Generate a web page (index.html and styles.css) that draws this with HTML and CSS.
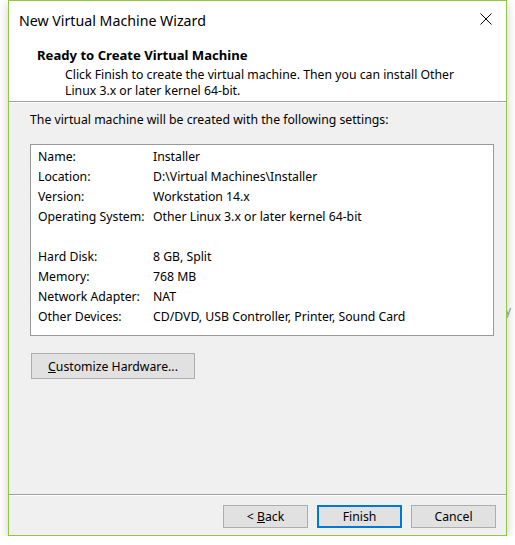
FILE: index.html
```html
<!DOCTYPE html>
<html lang="en">
<head>
<meta charset="utf-8">
<title>New Virtual Machine Wizard</title>
<link rel="stylesheet" href="styles.css">
</head>
<body>
<span class="behind">y</span>
<div class="window">
  <div class="header">
    <div class="titlebar">
      <span class="title">New Virtual Machine Wizard</span>
      <svg class="close" width="12" height="12" viewBox="0 0 12 12" aria-label="Close">
        <path d="M0.5 0.5 L11.5 11.5 M11.5 0.5 L0.5 11.5" stroke="#000" stroke-width="1" fill="none"/>
      </svg>
    </div>
    <div class="heading">Ready to Create Virtual Machine</div>
    <div class="subtitle">Click Finish to create the virtual machine. Then you can install Other<br>Linux 3.x or later kernel 64-bit.</div>
  </div>
  <div class="etch"></div>
  <div class="body">
    <div class="intro">The virtual machine will be created with the following settings:</div>
    <div class="box">
      <div class="row"><span class="label">Name:</span><span class="value">Installer</span></div>
      <div class="row"><span class="label">Location:</span><span class="value">D:\Virtual Machines\Installer</span></div>
      <div class="row"><span class="label">Version:</span><span class="value">Workstation 14.x</span></div>
      <div class="row"><span class="label">Operating System:</span><span class="value">Other Linux 3.x or later kernel 64-bit</span></div>
      <div class="row"></div>
      <div class="row"><span class="label">Hard Disk:</span><span class="value">8 GB, Split</span></div>
      <div class="row"><span class="label">Memory:</span><span class="value">768 MB</span></div>
      <div class="row"><span class="label">Network Adapter:</span><span class="value">NAT</span></div>
      <div class="row"><span class="label">Other Devices:</span><span class="value">CD/DVD, USB Controller, Printer, Sound Card</span></div>
    </div>
    <div class="btn customize"><span><u>C</u>ustomize Hardware...</span></div>
    <div class="spacer"></div>
    <div class="etch"></div>
    <div class="footer">
      <div class="btn"><span>&lt; <u>B</u>ack</span></div>
      <div class="btn default">Finish</div>
      <div class="btn">Cancel</div>
    </div>
  </div>
</div>
</body>
</html>
```
FILE: styles.css
```css
html, body {
  margin: 0;
  padding: 0;
  background: #ffffff;
}
body {
  font-family: "Noto Sans", "Liberation Sans", sans-serif;
  font-size: 12.25px;
  color: #000;
  overflow: hidden;
}
.behind {
  position: absolute;
  left: 505px;
  top: 302px;
  color: #9a9a9a;
  font-size: 12px;
  z-index: 0;
}
.window {
  position: relative;
  z-index: 1;
  margin-left: 8px;
  width: 499px;
  height: 536px;
  box-sizing: border-box;
  border: 1px solid #8fc73e;
  background: #f0f0f0;
  box-shadow: 0 3px 10px rgba(0, 0, 0, 0.2);
  display: flex;
  flex-direction: column;
}
.header {
  background: #ffffff;
  height: 100px;
  flex: none;
}
.titlebar {
  display: flex;
  justify-content: space-between;
  align-items: flex-start;
  padding: 5px 14px 0 10px;
}
.title {
  font-size: 14.2px;
  line-height: 29px;
}
.close {
  margin-top: 7px;
  display: block;
}
.heading {
  margin-top: 12px;
  padding-left: 28px;
  font-weight: bold;
  font-size: 13.1px;
  line-height: 16px;
}
.subtitle {
  margin-top: 4px;
  padding-left: 56px;
  line-height: 16px;
}
.etch {
  flex: none;
  height: 0;
  border-top: 1px solid #a0a0a0;
  border-bottom: 1px solid #ffffff;
}
.body {
  flex: 1;
  display: flex;
  flex-direction: column;
}
.intro {
  margin: 9px 0 0 21px;
  line-height: 16px;
}
.box {
  margin: 16px 0 0 21px;
  width: 464px;
  height: 192px;
  box-sizing: border-box;
  border: 1px solid #9a9a9a;
  background: #ffffff;
  padding: 2px 0 0 7px;
}
.row {
  display: flex;
  height: 20px;
  line-height: 20px;
}
.label {
  width: 115px;
  flex: none;
}
.btn {
  box-sizing: border-box;
  width: 85px;
  height: 23px;
  border: 1px solid #adadad;
  background: #e1e1e1;
  display: flex;
  align-items: center;
  justify-content: center;
}
.customize {
  margin: 17px 0 0 22px;
  width: 164px;
  height: 26px;
}
.spacer {
  flex: 1;
}
.footer {
  display: flex;
  justify-content: flex-end;
  gap: 9px;
  padding: 9px 10px 7px 0;
}
.btn.default {
  border: 2px solid #0078d7;
}
```
